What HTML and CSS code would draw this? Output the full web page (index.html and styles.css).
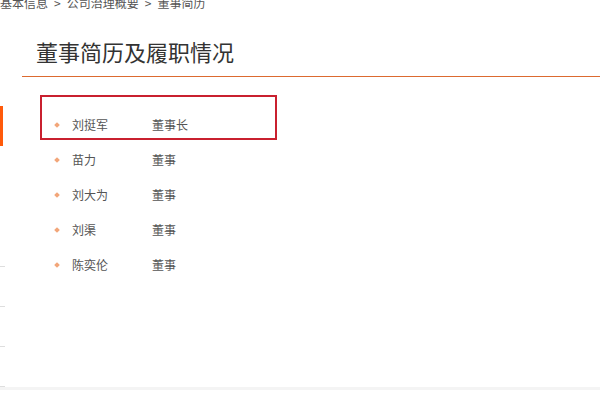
FILE: index.html
```html
<!DOCTYPE html>
<html lang="zh-CN">
<head>
<meta charset="utf-8">
<title>董事简历</title>
<link rel="stylesheet" href="styles.css">
</head>
<body>
<div class="crumb">基本信息<span class="sep">&gt;</span>公司治理概要<span class="sep">&gt;</span>董事简历</div>
<div class="page">
  <div class="side">
    <div class="marker"></div>
    <div class="ticks">
      <span class="tick"></span>
      <span class="tick"></span>
      <span class="tick"></span>
      <span class="tick"></span>
    </div>
  </div>
  <div class="main">
    <h1 class="title">董事简历及履职情况</h1>
    <ul class="list">
      <li class="row hl"><span class="dot"></span><span class="name">刘挺军</span><span class="role">董事长</span></li>
      <li class="row"><span class="dot"></span><span class="name">苗力</span><span class="role">董事</span></li>
      <li class="row"><span class="dot"></span><span class="name">刘大为</span><span class="role">董事</span></li>
      <li class="row"><span class="dot"></span><span class="name">刘渠</span><span class="role">董事</span></li>
      <li class="row"><span class="dot"></span><span class="name">陈奕伦</span><span class="role">董事</span></li>
    </ul>
  </div>
</div>
<div class="foot"></div>
</body>
</html>
```
FILE: styles.css
```css
html, body {
  margin: 0;
  padding: 0;
  background: #fff;
  height: 400px;
  overflow: hidden;
}
body {
  font-family: "Noto Sans CJK SC", "Noto Sans", sans-serif;
  color: #555;
  display: flex;
  flex-direction: column;
}
.crumb {
  font-size: 12px;
  line-height: 12px;
  height: 12px;
  margin-top: -3px;
  margin-bottom: -1px;
  color: #555;
  white-space: nowrap;
}
.sep {
  margin: 0 6px;
}
.page {
  display: flex;
  flex: 1;
}
.side {
  width: 22px;
  flex: none;
  display: flex;
  flex-direction: column;
}
.marker {
  width: 3px;
  height: 40px;
  margin-top: 98px;
  background: #ff5a0a;
}
.ticks {
  display: flex;
  flex-direction: column;
  gap: 39px;
  margin-top: 120px;
}
.tick {
  display: block;
  width: 5px;
  height: 1px;
  background: #dedede;
}
.main {
  flex: 1;
}
.title {
  margin: 32px 0 0;
  padding: 0 0 14px 14px;
  font-size: 22px;
  line-height: 22px;
  font-weight: normal;
  color: #333;
  border-bottom: 1px solid #dc6a30;
}
.list {
  list-style: none;
  margin: 0 0 0 18px;
  padding: 30px 0 0;
}
.row {
  position: relative;
  display: flex;
  align-items: center;
  height: 35px;
  padding-left: 15px;
  font-size: 12px;
  color: #555;
}
.dot {
  width: 4px;
  height: 4px;
  background: #f2a679;
  transform: rotate(45deg);
  margin-right: 13px;
}
.name {
  width: 80px;
}
.hl::after {
  content: "";
  position: absolute;
  left: 0;
  top: -12px;
  width: 237px;
  height: 45px;
  box-sizing: border-box;
  border: 2px solid #c9202f;
}
.foot {
  height: 3px;
  margin-bottom: 10px;
  background: #f4f4f4;
  flex: none;
}
```
